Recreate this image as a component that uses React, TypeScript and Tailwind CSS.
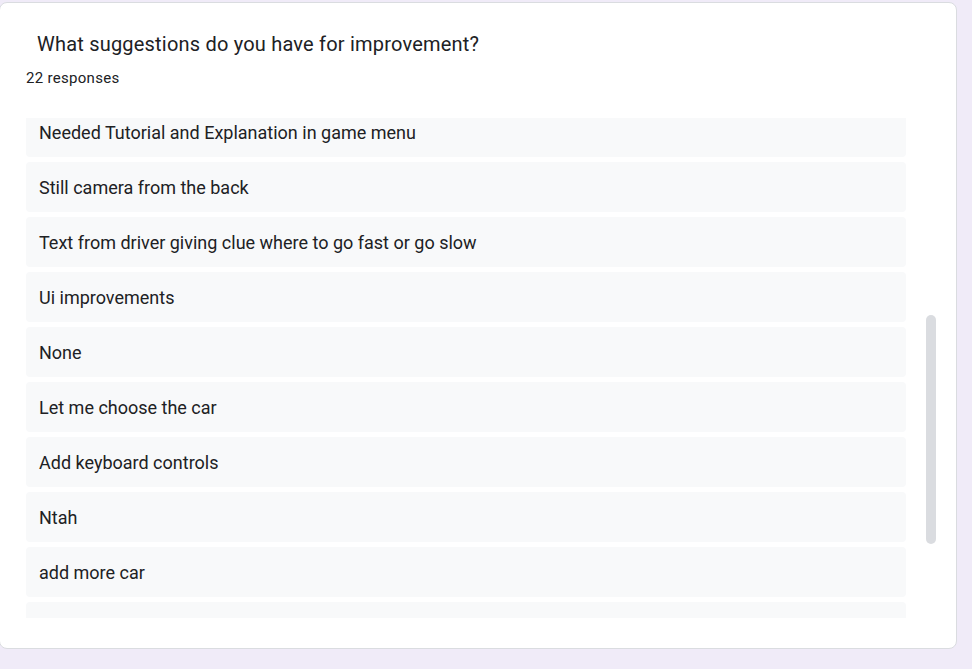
const responses = [
  "Needed Tutorial and Explanation in game menu",
  "Still camera from the back",
  "Text from driver giving clue where to go fast or go slow",
  "Ui improvements",
  "None",
  "Let me choose the car",
  "Add keyboard controls",
  "Ntah",
  "add more car",
  "",
];

export default function App() {
  return (
    <div className="min-h-[669px] w-full bg-[#f0ebf8] pt-[2px] font-['Roboto',_'Liberation_Sans',_sans-serif] text-[#202124]">
      <div className="-ml-px h-[647px] w-[958px] rounded-lg border border-[#dadce0] bg-white pl-[26px] pt-[27px]">
        <h2 className="pl-[11px] text-[20px] leading-[28px] tracking-[0.2px]">
          What suggestions do you have for improvement?
        </h2>
        <div className="mt-[10px] text-[15px] leading-[20px] tracking-[0.3px]">22 responses</div>

        <div className="mt-[30px] flex h-[500px]">
          <div className="w-[880px] overflow-hidden">
            <div className="-mt-[11px] flex flex-col gap-[5px]">
              {responses.map((r, i) => (
                <div
                  key={i}
                  className="flex h-[50px] shrink-0 items-center rounded bg-[#f8f9fa] px-[13px] text-[18px]"
                >
                  {r}
                </div>
              ))}
            </div>
          </div>
          <div className="ml-[20px] flex w-[10px] flex-col">
            <div className="h-[197px]" />
            <div className="h-[229px] rounded-full bg-[#dadce0]" />
          </div>
        </div>
      </div>
    </div>
  );
}
